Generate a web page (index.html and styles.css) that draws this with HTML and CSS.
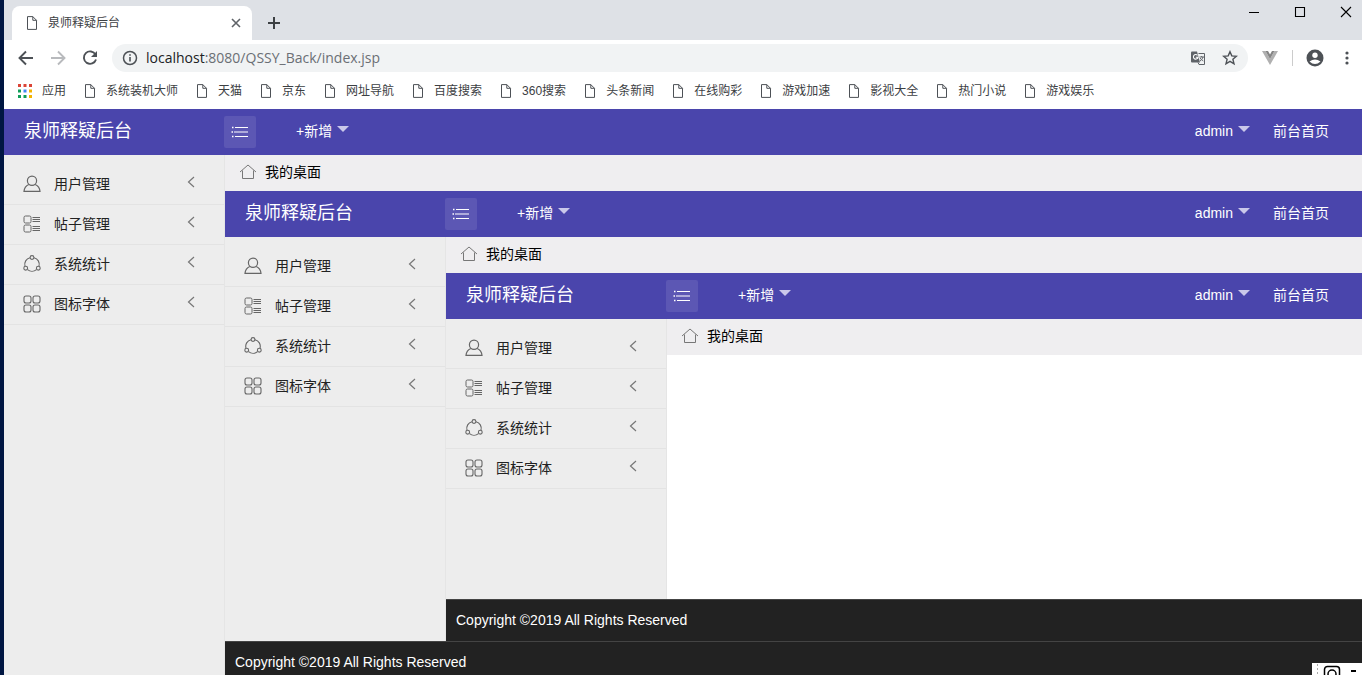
FILE: index.html
```
<!DOCTYPE html>
<html lang="zh-CN">
<head>
<meta charset="utf-8">
<title>泉师释疑后台</title>
<link rel="stylesheet" href="styles.css">
</head>
<body>
<svg class="sprite" aria-hidden="true">
  <symbol id="doc" viewBox="0 0 12 14"><path d="M1.500.6h5.300l3.700 3.700v9.100h-9zM6.800.6v3.700h3.700" fill="none" stroke="currentColor"/></symbol>
  <symbol id="list" viewBox="0 0 18 12"><path d="M4 1.500h13M3 6h14M4 10.500h13" stroke="currentColor" stroke-width="1.200"/><path d="M1 1.500h1.500M0.500 6H2M1 10.500h1.500" stroke="currentColor" stroke-width="1.400"/></symbol>
  <symbol id="home" viewBox="0 0 18 16"><path d="M1 8l8-7 8 7M3.500 6.500v8h11v-8" fill="none" stroke="currentColor"/></symbol>
  <symbol id="user" viewBox="0 0 18 18"><g fill="none" stroke="currentColor" stroke-width="1.200"><circle cx="9" cy="5.700" r="4.600"/><path d="M5.800 9.500C3 10.700 1.300 13 1 16.400h16c-.3-3.400-2-5.700-4.800-6.900"/></g></symbol>
  <symbol id="post" viewBox="0 0 18 18"><g fill="none" stroke="currentColor"><rect x="1" y="1" width="7" height="7" rx="1.500"/><rect x="1" y="10" width="7" height="7" rx="1.500"/><path d="M9.500 2.500H17M9.500 4.500H17M9.500 6.500H17M9.500 11.500H17M9.500 13.500H17M9.500 15.500H17"/></g></symbol>
  <symbol id="stat" viewBox="0 0 18 18"><g fill="none" stroke="currentColor" stroke-width="1.100"><path d="M7 2.700a6.800 6.800 0 0 0-5 8.500M11 2.700a6.800 6.800 0 0 1 5 8.500M4.500 14.600a7 7 0 0 0 9 0"/><circle cx="9" cy="2.500" r="1.900"/><circle cx="2.700" cy="13.200" r="1.900"/><circle cx="15.300" cy="13.200" r="1.900"/></g></symbol>
  <symbol id="grid" viewBox="0 0 18 18"><g fill="none" stroke="currentColor" stroke-width="1.100"><rect x="1" y="1" width="7" height="7" rx="2"/><rect x="10" y="1" width="7" height="7" rx="2"/><rect x="1" y="10" width="7" height="7" rx="2"/><rect x="10" y="10" width="7" height="7" rx="2"/></g></symbol>
  <symbol id="chev" viewBox="0 0 8 12"><path d="M7 1L1.500 6 7 11" fill="none" stroke="currentColor" stroke-width="1.200"/></symbol>
  <symbol id="caret" viewBox="0 0 12 6"><path d="M0 0h12L6 6z" fill="currentColor"/></symbol>
</svg>

<div class="window">
  <div class="tabstrip">
    <div class="tab">
      <svg class="doc"><use href="#doc"/></svg>
      <span class="tab-title">泉师释疑后台</span>
      <button class="plain" aria-label="关闭标签页"><svg width="10" height="10" viewBox="0 0 10 10"><path d="M1 1l8 8M9 1L1 9" stroke="#5f6368" stroke-width="1.600"/></svg></button>
    </div>
    <button class="plain new-tab" aria-label="新标签页"><svg width="12" height="12" viewBox="0 0 12 12"><path d="M6 0v12M0 6h12" stroke="#3c4043" stroke-width="2"/></svg></button>
    <div class="win-buttons">
      <button class="plain" aria-label="最小化"><svg width="12" height="12" viewBox="0 0 12 12"><path d="M1 6.500h10" stroke="#000"/></svg></button>
      <button class="plain" aria-label="最大化"><svg width="12" height="12" viewBox="0 0 12 12"><path d="M1.500 1.500h9v9h-9z" fill="none" stroke="#000" stroke-width="1.100"/></svg></button>
      <button class="plain" aria-label="关闭"><svg width="12" height="12" viewBox="0 0 12 12"><path d="M1 1l10 10M11 1L1 11" stroke="#000" stroke-width="1.100"/></svg></button>
    </div>
  </div>

  <div class="toolbar">
    <div class="nav-buttons">
      <button class="plain" aria-label="后退"><svg width="16" height="16" viewBox="0 0 16 16"><path d="M15 8H2M8 1.500L1.500 8 8 14.500" fill="none" stroke="#4d5156" stroke-width="1.900"/></svg></button>
      <button class="plain" aria-label="前进"><svg width="16" height="16" viewBox="0 0 16 16"><path d="M1 8h13M8 1.500L14.500 8 8 14.500" fill="none" stroke="#b8babd" stroke-width="1.900"/></svg></button>
      <button class="plain" aria-label="重新加载"><svg width="16" height="16" viewBox="0 0 16 16"><path d="M13.500 4.600A6.200 6.200 0 1 0 14 9.500" fill="none" stroke="#4d5156" stroke-width="1.900"/><path d="M15 1v6H9z" fill="#4d5156"/></svg></button>
    </div>
    <div class="address">
      <svg width="16" height="16" viewBox="0 0 16 16"><circle cx="8" cy="8" r="6.500" fill="none" stroke="#4d5156" stroke-width="1.500"/><path d="M8 7v4.500M8 4.200v1.600" stroke="#4d5156" stroke-width="1.600"/></svg>
      <div class="url" role="textbox" aria-label="地址" contenteditable="true" spellcheck="false"><span class="host">localhost</span>:8080/QSSY_Back/index.jsp</div>
      <button class="plain" aria-label="翻译"><svg width="16" height="16" viewBox="0 0 16 16"><path d="M1 2.500Q1 1.500 2 1.500h5l3 11H2q-1 0-1-1z" fill="#5f6368"/><path d="M7.500 5.300A2.300 2.300 0 1 0 8 7.300H5.800" fill="none" stroke="#fff" stroke-width="1.100"/><path d="M8.500 3.500h6v11H9l-1-2M9.500 7H14M11.700 6v1M13 7c-.5 2-1.500 3-3 4M10.300 8c.7 1.500 1.500 2.200 3 3" fill="none" stroke="#5f6368"/></svg></button>
      <button class="plain" aria-label="收藏"><svg width="16" height="16" viewBox="0 0 16 16"><path d="M8 1.700l1.800 4.200 4.600.4-3.500 3 1.100 4.500L8 11.400l-4 2.400 1.100-4.500-3.500-3 4.600-.4z" fill="none" stroke="#4d5156" stroke-width="1.400"/></svg></button>
    </div>
    <button class="plain vue" aria-label="Vue"><svg width="16" height="14" viewBox="0 0 16 14"><path d="M0 0h3.500L8 8l4.500-8H16L8 14z" fill="#b0b0b0"/><path d="M3.500 0H6l2 3.500L10 0h2.500L8 8z" fill="#858585"/></svg></button>
    <span class="rule"></span>
    <button class="plain avatar" aria-label="账户"><svg width="18" height="18" viewBox="0 0 18 18"><circle cx="9" cy="9" r="8.500" fill="#4d5156"/><circle cx="9" cy="6.300" r="2.700" fill="#fff"/><path d="M3.500 12.500Q9 8.500 14.500 12.500 9 17.500 3.500 12.500z" fill="#fff"/></svg></button>
    <button class="plain more" aria-label="更多"><svg width="4" height="14" viewBox="0 0 4 14"><g fill="#4d5156"><circle cx="2" cy="2" r="1.600"/><circle cx="2" cy="7" r="1.600"/><circle cx="2" cy="12" r="1.600"/></g></svg></button>
  </div>

  <nav class="bookmarks" aria-label="书签">
    <a href="#" class="apps"><svg width="14" height="14" viewBox="0 0 14 14"><path d="M0 0h3v3H0zM5.500 0h3v3h-3zM11 0h3v3h-3z" fill="#db4437"/><path d="M0 5.500h3v3H0zM0 11h3v3H0zM5.500 11h3v3h-3z" fill="#0f9d58"/><path d="M5.500 5.500h3v3h-3z" fill="#4285f4"/><path d="M11 5.500h3v3h-3zM11 11h3v3h-3z" fill="#f4b400"/></svg>应用</a>
    <a href="#"><svg class="doc"><use href="#doc"/></svg>系统装机大师</a>
    <a href="#"><svg class="doc"><use href="#doc"/></svg>天猫</a>
    <a href="#"><svg class="doc"><use href="#doc"/></svg>京东</a>
    <a href="#"><svg class="doc"><use href="#doc"/></svg>网址导航</a>
    <a href="#"><svg class="doc"><use href="#doc"/></svg>百度搜索</a>
    <a href="#"><svg class="doc"><use href="#doc"/></svg>360搜索</a>
    <a href="#"><svg class="doc"><use href="#doc"/></svg>头条新闻</a>
    <a href="#"><svg class="doc"><use href="#doc"/></svg>在线购彩</a>
    <a href="#"><svg class="doc"><use href="#doc"/></svg>游戏加速</a>
    <a href="#"><svg class="doc"><use href="#doc"/></svg>影视大全</a>
    <a href="#"><svg class="doc"><use href="#doc"/></svg>热门小说</a>
    <a href="#"><svg class="doc"><use href="#doc"/></svg>游戏娱乐</a>
  </nav>

  <div class="panel">
    <header class="header">
      <a class="brand" href="#">泉师释疑后台</a>
      <button class="toggle" aria-label="菜单"><svg><use href="#list"/></svg></button>
      <button class="drop add">+新增<svg><use href="#caret"/></svg></button>
      <button class="drop admin">admin<svg><use href="#caret"/></svg></button>
      <a class="front" href="#">前台首页</a>
    </header>
    <div class="body">
      <nav class="side">
        <a href="#"><svg class="ico"><use href="#user"/></svg><span>用户管理</span><svg class="chev"><use href="#chev"/></svg></a>
        <a href="#"><svg class="ico"><use href="#post"/></svg><span>帖子管理</span><svg class="chev"><use href="#chev"/></svg></a>
        <a href="#"><svg class="ico"><use href="#stat"/></svg><span>系统统计</span><svg class="chev"><use href="#chev"/></svg></a>
        <a href="#"><svg class="ico"><use href="#grid"/></svg><span>图标字体</span><svg class="chev"><use href="#chev"/></svg></a>
      </nav>
      <main class="main">
        <div class="page-tabs"><a href="#"><svg><use href="#home"/></svg>我的桌面</a></div>

        <div class="panel spill">
          <header class="header">
            <a class="brand" href="#">泉师释疑后台</a>
            <button class="toggle" aria-label="菜单"><svg><use href="#list"/></svg></button>
            <button class="drop add">+新增<svg><use href="#caret"/></svg></button>
            <button class="drop admin">admin<svg><use href="#caret"/></svg></button>
            <a class="front" href="#">前台首页</a>
          </header>
          <div class="body">
            <nav class="side">
              <a href="#"><svg class="ico"><use href="#user"/></svg><span>用户管理</span><svg class="chev"><use href="#chev"/></svg></a>
              <a href="#"><svg class="ico"><use href="#post"/></svg><span>帖子管理</span><svg class="chev"><use href="#chev"/></svg></a>
              <a href="#"><svg class="ico"><use href="#stat"/></svg><span>系统统计</span><svg class="chev"><use href="#chev"/></svg></a>
              <a href="#"><svg class="ico"><use href="#grid"/></svg><span>图标字体</span><svg class="chev"><use href="#chev"/></svg></a>
            </nav>
            <div class="main">
              <div class="page-tabs"><a href="#"><svg><use href="#home"/></svg>我的桌面</a></div>

              <div class="panel">
                <header class="header">
                  <a class="brand" href="#">泉师释疑后台</a>
                  <button class="toggle" aria-label="菜单"><svg><use href="#list"/></svg></button>
                  <button class="drop add">+新增<svg><use href="#caret"/></svg></button>
                  <button class="drop admin">admin<svg><use href="#caret"/></svg></button>
                  <a class="front" href="#">前台首页</a>
                </header>
                <div class="body">
                  <nav class="side">
                    <a href="#"><svg class="ico"><use href="#user"/></svg><span>用户管理</span><svg class="chev"><use href="#chev"/></svg></a>
                    <a href="#"><svg class="ico"><use href="#post"/></svg><span>帖子管理</span><svg class="chev"><use href="#chev"/></svg></a>
                    <a href="#"><svg class="ico"><use href="#stat"/></svg><span>系统统计</span><svg class="chev"><use href="#chev"/></svg></a>
                    <a href="#"><svg class="ico"><use href="#grid"/></svg><span>图标字体</span><svg class="chev"><use href="#chev"/></svg></a>
                  </nav>
                  <div class="main">
                    <div class="page-tabs"><a href="#"><svg><use href="#home"/></svg>我的桌面</a></div>
                  </div>
                </div>
                <footer class="footer">Copyright ©2019 All Rights Reserved</footer>
              </div>
            </div>
          </div>
          <footer class="footer">Copyright ©2019 All Rights Reserved</footer>
        </div>
      </main>
    </div>
  </div>
</div>

<div class="ime">
  <svg width="50" height="12" viewBox="0 0 50 12"><path d="M5.500 1v11" stroke="#aaa" stroke-dasharray="2 2"/><rect x="12.500" y="3.500" width="15" height="14" rx="3" fill="none" stroke="#000" stroke-width="1.500"/><circle cx="20" cy="11" r="4" fill="none" stroke="#000" stroke-width="1.500"/><path d="M39 8h5" stroke="#000" stroke-width="2"/></svg>
</div>
</body>
</html>
```
FILE: styles.css
```
* {
  box-sizing: border-box;
}

body {
  margin: 0;
  height: 100vh;
  overflow: hidden;
  background: #001642;
  padding-left: 4px;
  font: 14px/20px "Liberation Sans", "Noto Sans CJK SC", sans-serif;
  color: #000;
}

a {
  color: inherit;
  text-decoration: none;
}

button {
  font: inherit;
  border: 0;
  padding: 0;
  cursor: pointer;
}

svg {
  display: block;
  flex: none;
}

.sprite {
  position: absolute;
  width: 0;
  height: 0;
}

.plain {
  background: none;
  display: flex;
}

.doc {
  width: 12px;
  height: 14px;
  color: #4d5156;
}

.window {
  display: flex;
  flex-direction: column;
  height: 100%;
  overflow: hidden;
  background: #fff;
}

/* Browser chrome */
.tabstrip {
  display: flex;
  align-items: flex-start;
  height: 40px;
  padding-left: 8px;
  background: #dee1e6;
}

.tab {
  display: flex;
  align-items: center;
  width: 240px;
  height: 34px;
  margin-top: 6px;
  padding: 0 11px 0 14px;
  border-radius: 8px 8px 0 0;
  background: #fff;
  font-size: 12px;
  color: #3c4043;
}

.tab-title {
  flex: 1;
  margin-left: 10px;
}

.new-tab {
  margin: 17px 0 0 16px;
}

.win-buttons {
  display: flex;
  gap: 34px;
  margin: 6px 10px 0 auto;
}

.toolbar {
  display: flex;
  align-items: center;
  height: 36px;
  padding-right: 13px;
}

.nav-buttons {
  display: flex;
  gap: 16px;
  padding: 0 14px;
}

.address {
  display: flex;
  flex: 1;
  align-items: center;
  gap: 16px;
  height: 28px;
  padding: 0 10px;
  border-radius: 14px;
  background: #f1f3f4;
}

.url {
  flex: 1;
  margin-left: -8px;
  font-family: "Open Sans", "Noto Sans", sans-serif;
  font-size: 14px;
  color: #6b6f74;
  outline: 0;
}

.host {
  color: #202124;
}

.vue {
  margin-left: 14px;
}

.rule {
  width: 1px;
  height: 16px;
  margin: 0 13px 0 14px;
  background: #ccc;
}

.more {
  margin-left: 21px;
}

.bookmarks {
  display: flex;
  align-items: center;
  gap: 18px;
  height: 33px;
  padding: 0 14px 4px;
  font-size: 12px;
  color: #3c4043;
  white-space: nowrap;
}

.bookmarks a {
  display: flex;
  align-items: center;
  gap: 10px;
}

/* Admin panel */
.panel {
  display: flex;
  flex: 1;
  flex-direction: column;
  min-height: 0;
}

/* The framed page is taller than the room left for it */
.spill {
  margin-bottom: -8px;
}

.header {
  display: flex;
  flex: none;
  align-items: center;
  height: 46px;
  padding-right: 33px;
  background: #4a45ac;
  color: #fff;
}

.brand {
  width: 220px;
  padding: 0 0 3px 20px;
  font-size: 18px;
}

.toggle {
  display: grid;
  place-items: center;
  width: 32px;
  height: 32px;
  border-radius: 2px;
  background: #5c57b4;
  color: #fff;
}

.toggle svg {
  width: 18px;
  height: 12px;
}

.drop {
  display: flex;
  align-items: center;
  gap: 5px;
  padding-bottom: 2px;
  background: none;
  color: #fff;
}

.drop svg {
  width: 12px;
  height: 6px;
  margin-bottom: 4px;
  color: #cac8ea;
}

.add {
  margin-left: 40px;
}

.admin {
  margin-left: auto;
}

.front {
  margin-left: 23px;
  padding-bottom: 2px;
}

.body {
  display: flex;
  flex: 1;
  min-height: 0;
}

.side {
  flex: none;
  width: 221px;
  padding-top: 10px;
  border-right: 1px solid #e5e5e5;
  background: #ededed;
  color: #222;
}

.side a {
  display: flex;
  align-items: center;
  height: 40px;
  padding: 0 29px 2px 19px;
  border-bottom: 1px solid #e3e3e3;
}

.side span {
  flex: 1;
  margin-left: 13px;
}

.ico {
  width: 18px;
  height: 18px;
  color: #666;
}

.chev {
  width: 8px;
  height: 12px;
  margin-bottom: 4px;
  color: #777;
}

.main {
  display: flex;
  flex: 1;
  flex-direction: column;
  min-width: 0;
}

.page-tabs {
  flex: none;
  height: 36px;
  padding-left: 14px;
  background: #efeef0;
}

.page-tabs a {
  display: inline-flex;
  align-items: center;
  gap: 8px;
  height: 36px;
  padding-bottom: 2px;
}

.page-tabs svg {
  width: 18px;
  height: 16px;
  color: #777;
}

.footer {
  flex: none;
  height: 42px;
  padding: 10px;
  border-top: 1px solid #444;
  background: #222;
  color: #fff;
}

/* Input method bar floating over the corner of the desktop */
.ime {
  position: absolute;
  right: 0;
  bottom: 0;
  background: #fff;
}
```
